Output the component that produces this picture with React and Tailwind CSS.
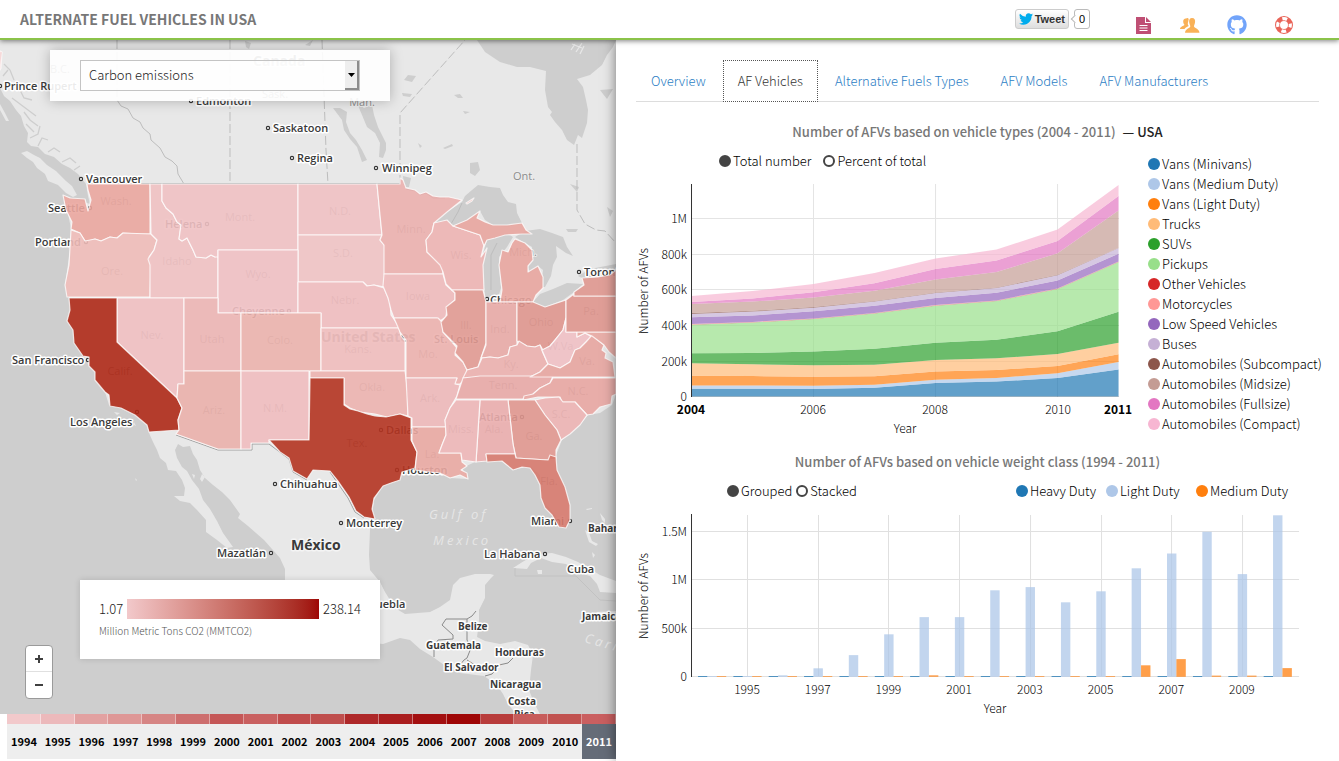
import React from "react";
import { FaGithub } from "react-icons/fa";

const LAND = "#e8e8e8";
const WATER = "#cecece";

const land = [
  "M0,40 V88 L4,96 10,101 16,110 21,116 24,126 28,133 27,142 31,146 38,147 45,154 54,157 62,164 70,168 78,174 86,184 88,196 90,204 63,195 68,213 71,229 70,250 65,285 69,298 70,310 67,321 73,330 74,340 83,355 89,366 95,372 95,380 105,392 109,405 121,408 135,415 147,425 149,433 153,442 157,450 160,458 166,463 168,470 176,471 182,480 185,488 184,496 174,496 180,501 190,503 197,510 206,520 206,532 217,540 227,548 233,547 228,540 223,533 217,521 210,509 203,500 199,489 192,480 187,471 182,467 177,458 175,450 178,444 183,447 190,446 193,454 197,460 200,470 205,478 213,485 222,492 230,500 235,507 240,514 238,518 248,526 256,533 264,540 272,549 280,558 285,569 285,580 300,625 340,640 383,644 400,638 410,640 420,649 433,657 444,665 460,673 484,676 497,685 503,694 508,704 516,714 H540 L534,703 529,690 531,670 533,655 528,645 515,641 500,644 485,641 477,637 479,622 479,610 485,598 485,585 491,578 494,575 490,574 475,574 460,578 453,585 450,600 440,607 430,612 405,614 395,608 385,592 380,582 370,570 369,555 370,530 372,516 374,500 383,486 400,480 402,472 440,473 450,478 468,479 462,468 475,462 500,460 513,470 530,466 540,475 541,498 555,515 560,527 568,526 570,505 565,490 557,470 556,455 562,440 580,425 588,415 600,413 612,405 616,394 V40Z",
  "M21,153 L27,151 34,155 40,158 47,165 56,171 66,181 72,186 77,195 73,197 66,193 58,185 48,181 45,174 37,168 33,162 27,158Z",
  "M513,568 L524,561 538,554 552,553 566,557 578,562 590,569 600,575 616,581 V593 L600,592 597,584 590,576 576,572 566,564 552,562 541,558 531,563 527,569Z",
  "M537,570 l5,0 0,4 -4,0Z",
  "M596,612 L616,611 V617 L600,617Z",
  "M585,530 l4,3 3,8 6,3 -2,2 -7,-4Z M600,513 l5,6 0,4 -3,-3Z M586,509 l6,-1 0,1 -5,1Z M592,552 l3,3 -2,3Z",
  "M549,109 L555,107 561,110 564,115 558,116Z",
  "M114,412 l6,1 -3,2Z M124,420 l4,1 -2,1Z M134,422 l2,4 -2,-1Z M135,478 l2,2 -1,1Z",
  "M192,474 l3,1 -1,4Z M202,474 l3,3 -3,5 -2,-3Z M0,104 l5,9 4,8 -3,0 -6,-11Z",
];

const water = [
  "M477,40 L485,52 491,56 500,62 517,67 530,67 546,71 545,90 548,107 552,112 550,115 555,122 562,130 567,140 574,145 578,135 582,138 587,123 588,110 586,100 583,87 577,79 590,75 602,65 607,55 613,47 616,40Z",
  "M435,223 L440,217 447,212 462,202 465,196 472,190 478,185 490,187 500,188 503,195 508,202 516,204 517,213 522,223 507,227 493,225 485,220 480,211 467,220 453,226 447,220Z",
  "M487,240 L482,257 483,280 486,302 497,301 501,288 499,265 499,257 507,247 513,237 507,233 497,237Z",
  "M515,237 L525,231 540,229 552,233 563,237 567,247 573,256 566,253 556,246 557,257 553,265 551,276 545,287 541,287 543,270 538,266 530,273 528,267 533,258 532,247 520,240Z",
  "M533,302 L540,294 553,289 567,283 583,284 574,292 563,300 545,307Z",
  "M578,276 L590,269 616,264 V272 L600,278 584,279Z",
  "M357,103 L364,108 372,105 374,115 378,127 382,135 386,143 386,150 383,158 379,157 380,143 375,133 367,127 362,115Z",
  "M333,108 L340,108 347,112 346,122 350,133 356,140 362,150 367,160 362,162 357,147 350,139 344,130 342,120Z",
  "M404,80 L408,75 416,76 412,82Z M402,93 l10,1 -2,3 -7,-1Z M454,95 l6,-1 3,4 -5,0Z M463,111 l7,1 -5,2Z M443,148 l9,-4 1,2 -8,3Z M418,143 l4,3 -2,2Z M470,163 l8,-1 2,8 -5,6 -5,-3Z M570,184 l9,3 -2,5Z M566,229 l12,0 -2,3 -8,0Z M600,90 l13,-1 -6,10 -4,-5Z M607,207 l6,4 -3,6Z M245,41 l6,2 -2,6 -3,-2Z M305,45 l8,-5 -3,6Z M403,176 l8,2 -2,9 -5,0Z",
];

const fjords =
  "M4,64 L10,70 14,80 M8,70 L3,76 M14,84 L20,90 26,88 M20,90 L24,98 32,100 M12,98 L20,104 28,110 36,116 M24,112 L30,120 38,126 M26,124 L34,132 M30,138 L38,134 40,126 M38,146 L42,138 48,140 M48,152 L54,148 60,152 M62,162 L70,158 76,163 M74,170 L80,166";

const states = [
  ["M63,195 L70,198 85,199 88,211 91,200 88,190 87,184 H150 V234 L140,234 123,233 117,238 110,237 101,241 95,239 88,241 85,241 80,233 71,229 72,222 66,210Z", "#eaa69f"],
  ["M71,230 L80,233 85,241 95,239 101,241 110,237 117,238 123,233 151,234 157,240 154,250 149,257 151,264 150,297 H67 L65,285 69,265Z", "#eebbb8"],
  ["M150,184 H162 V201 L166,208 173,214 177,222 181,225 179,239 182,241 187,238 193,250 196,257 206,258 211,255 215,257 218,255 V298 H150 V265 L148,259 154,250 157,240 151,234Z", "#efc1c2"],
  ["M162,184 H298 V250 H218 V257 L215,257 211,255 206,258 196,257 193,250 187,238 182,241 179,239 181,225 177,222 173,214 166,208 162,201Z", "#f0c1c3"],
  ["M298,184 H377 L380,215 382,235 H298Z", "#f0c1c3"],
  ["M298,235 H382 L380,240 385,246 V287 L374,285 367,286 363,282 H298Z", "#f0c3c4"],
  ["M218,250 H298 V313 H218Z", "#f0c0c3"],
  ["M298,282 H363 L367,286 374,285 384,288 390,302 391,315 400,328 H321 V313 H298Z", "#efbdbf"],
  ["M117,298 H184 V384 H178 L177,398 117,342Z", "#efbfc1"],
  ["M69,298 H117 V342 L177,398 182,408 178,420 179,430 149,432 147,425 135,415 121,408 110,406 109,395 105,392 95,380 V372 L89,366 89,357 83,356 74,343 73,330 67,321 70,310Z", "#ae2917"],
  ["M184,298 H218 V313 H241 V371 H184Z", "#ecb5b4"],
  ["M241,313 H321 V371 H241Z", "#ebb2ad"],
  ["M184,371 H241 V449 H218 L176,434 179,430 178,420 182,408 177,398 178,384 H184Z", "#eab0ab"],
  ["M241,371 H309 V440 H269 V443 H251 V449 H241Z", "#efbdbf"],
  ["M321,328 H399 L401,336 405,341 V371 H321Z", "#efbcbd"],
  ["M310,371 H405 L406,378 408,395 408,416 400,414 387,417 375,414 360,412 350,408 344,404 V378 H310Z", "#ecb2af"],
  ["M310,378 H344 V405 L350,409 358,411 367,414 375,416 386,417 400,414 411,418 V440 L417,452 415,468 402,472 400,480 391,483 383,486 374,498 372,509 375,519 364,517 356,511 349,497 338,481 330,471 313,470 307,479 293,471 289,458 280,452 269,440 H309Z", "#b43421"],
  ["M377,184 H400 V178 L403,180 406,188 415,190 420,194 426,192 433,196 440,197 449,197 462,200 447,212 434,223 432,232 426,240 427,252 435,259 442,265 443,274 H384 V245 L380,240 382,235 380,215Z", "#ebb0ae"],
  ["M384,274 H443 L446,285 455,293 455,300 447,307 446,317 440,321 437,318 H394 L391,310 388,298 383,286Z", "#eebabb"],
  ["M394,318 H438 L442,322 443,332 452,342 457,348 455,355 463,362 467,370 466,378 460,384 454,384 457,378 H406 V340 L400,332Z", "#ecb1ae"],
  ["M406,378 H457 L455,384 460,385 457,396 450,408 445,420 446,427 H412 V418 L408,416Z", "#edb8b9"],
  ["M412,427 H446 L446,435 442,445 439,453 H461 L462,462 467,466 461,470 467,473 468,479 460,475 450,478 440,473 430,472 415,470 417,452 412,441Z", "#e9a8a2"],
  ["M434,223 L447,220 453,226 465,230 480,235 484,245 481,257 487,248 483,265 484,290 H452 L446,284 443,272 440,265 427,252 426,240 432,232Z", "#edb4b3"],
  ["M452,290 H483 L486,302 V343 L482,355 478,367 467,370 463,362 455,353 457,346 443,332 441,322 447,315 446,307 455,300 455,293Z", "#e19a92"],
  ["M453,226 L467,220 480,211 477,218 485,222 493,225 507,225 522,223 526,230 532,234 522,234 505,235 495,238 487,240 484,246 480,235 465,230Z", "#e8a59e"],
  ["M466,203 L474,198 472,201 467,204Z", "#eeb4b0"],
  ["M515,239 L525,243 532,250 533,260 528,266 528,272 538,266 543,277 543,288 536,295 533,302 H500 L502,290 499,265 502,250 508,252 512,243Z", "#e8a59e"],
  ["M486,302 H517 V345 L510,347 508,355 498,358 490,357 481,358 486,345Z", "#e8aaa6"],
  ["M517,302 H533 L545,307 566,300 V318 L563,330 555,340 550,346 543,350 540,345 535,347 527,346 517,341Z", "#df968e"],
  ["M467,370 L478,367 482,358 490,357 498,358 508,355 510,347 517,345 519,341 527,346 535,347 540,345 543,353 548,364 540,372 530,377 H480 L463,378Z", "#ebb0ae"],
  ["M463,378 L480,376 H553 L550,383 540,388 533,394 523,399 H456 L460,387Z", "#e8a9a6"],
  ["M566,318 V332 H577 V337 L585,333 592,337 586,342 580,348 575,350 570,362 560,368 548,364 542,350 550,346 555,340 563,330Z", "#efc0c4"],
  ["M530,377 L540,372 548,364 560,368 570,362 575,350 580,348 586,342 592,335 604,345 602,350 606,353 605,358 613,362 615,377Z", "#e7a5a0"],
  ["M577,332 H616 V358 L609,352 604,345 592,336 585,333 577,337Z", "#e8a8a2"],
  ["M566,300 L574,294 V296 H616 V332 H566Z", "#df968e"],
  ["M574,296 L574,292 584,285 582,278 598,277 610,275 616,270 V296Z", "#df978f"],
  ["M553,378 H616 V394 L612,396 611,404 600,407 593,414 587,415 575,402 562,402 560,397 538,397 523,400 524,396 533,394 540,388 550,383Z", "#e8a6a2"],
  ["M535,400 L545,398 559,397 563,402 575,402 587,415 580,425 570,434 561,440 557,430 545,415Z", "#ecb2b2"],
  ["M508,400 H535 L545,415 557,430 561,440 556,450 556,459 548,460 516,458 513,444Z", "#e0978f"],
  ["M480,400 H508 L513,444 515,454 H486 L487,461 476,462Z", "#eaadad"],
  ["M456,400 H480 L476,462 462,460 461,453 H439 L442,445 446,435 445,420 450,408Z", "#edb6b7"],
  ["M486,454 H515 L516,458 548,460 550,455 556,457 557,470 565,487 570,505 570,520 566,528 559,527 552,515 545,508 541,498 540,485 535,475 530,468 522,467 513,470 502,461 487,462Z", "#d6796d"],
  ["M0,51 L2,52 1,68 0,70Z", "#efb5b5"],
];

const borders = [
  "M117,40 V100 M230,40 V184 M322,40 L326,150 328,184 M400,184 V113 L465,40 M577,144 V210 L585,224 596,230 605,231 616,243",
  "M117,100 L121,106 128,109 133,118 140,122 143,128 150,134 151,140 160,148 165,157 172,161 177,166 178,174 184,184",
  "M87,183.500 H400",
];

const nationBorders =
  "M434,657 L434,647 438,640 453,639 453,635 442,625 446,619 H467 V640 M467,619 L472,616 476,611 M467,640 L471,648 467,658 464,660 459,666 M467,660 L475,665 492,668 499,665 508,663 513,658 M485,676 L492,674 498,667";

const mapLabels = [
  ["Prince Rupert", 4, 90, 11],
  ["Edmonton", 196, 105, 11],
  ["Saskatoon", 273, 132, 11],
  ["Regina", 297, 162, 11],
  ["Winnipeg", 382, 172, 11],
  ["Vancouver", 86, 183, 11],
  ["Seattle", 48, 212, 11],
  ["Portland", 35, 246, 11],
  ["Helena", 165, 228, 11],
  ["Cheyenne", 232, 315, 11],
  ["San Francisco", 12, 364, 11],
  ["Los Angeles", 70, 426, 11],
  ["Chihuahua", 280, 488, 11],
  ["Monterrey", 346, 527, 11],
  ["Mazatlán", 217, 557, 11],
  ["Dallas", 386, 434, 11],
  ["Houston", 402, 474, 11],
  ["Atlanta", 479, 421, 11],
  ["St. Louis", 434, 343, 11],
  ["Chicago", 490, 304, 11],
  ["Toronto", 584, 276, 11],
  ["Miami", 531, 525, 11],
  ["La Habana", 484, 558, 11],
  ["Puebla", 369, 608, 11],
  ["Cuba", 567, 573, 11],
  ["Bahamas", 588, 532, 10],
  ["Belize", 458, 630, 10],
  ["Guatemala", 426, 649, 10],
  ["Honduras", 495, 656, 10],
  ["El Salvador", 444, 671, 10],
  ["Nicaragua", 490, 688, 10],
  ["Jamaica", 582, 620, 10],
  ["Costa", 508, 705, 10],
  ["Rica", 514, 718, 10],
  ["México", 291, 550, 14],
  ["United States", 321, 342, 14],
  ["Canada", 253, 66, 14],
];

const stateLabels = [
  ["B.C.", 60, 73], ["Sask.", 275, 98], ["Man.", 362, 106], ["Ont.", 524, 180],
  ["Wash.", 116, 205], ["Mont.", 240, 221], ["N.D.", 340, 215], ["S.D.", 343, 257],
  ["Minn.", 411, 233], ["Wis.", 461, 259], ["Mich.", 523, 256], ["Ore.", 112, 275],
  ["Idaho", 177, 265], ["Wyo.", 258, 278], ["Nev.", 152, 339], ["Utah", 212, 343],
  ["Colo.", 280, 344], ["Calif.", 120, 375], ["Ariz.", 214, 414], ["N.M.", 275, 412],
  ["Nebr.", 345, 304], ["Iowa", 418, 300], ["Kans.", 358, 353], ["Mo.", 428, 358],
  ["Okla.", 372, 391], ["Ark.", 430, 402], ["Tex.", 357, 447], ["La.", 432, 458],
  ["Miss.", 461, 433], ["Ala.", 494, 433], ["Ga.", 534, 440], ["Fla.", 549, 485],
  ["S.C.", 561, 418], ["N.C.", 578, 395], ["Tenn.", 503, 389], ["Ky.", 511, 368],
  ["Ill.", 466, 329], ["Ind.", 500, 333], ["Ohio", 541, 326], ["Pa.", 591, 315],
  ["W.Va.", 562, 350], ["Va.", 587, 365],
];

const cityDots = [
  [0, 86], [191, 101], [268, 128], [292, 158], [376, 168], [81, 179], [90, 208], [86, 242],
  [207, 224], [289, 311], [88, 360], [137, 412], [275, 484], [341, 523], [271, 553],
  [381, 430], [397, 470], [522, 417], [487, 299], [579, 272], [570, 521], [545, 554],
];

function UsMap() {
  return (
    <svg
      viewBox="0 40 616 674"
      preserveAspectRatio="xMinYMin slice"
      className="absolute inset-0 h-full w-full font-['Open_Sans',sans-serif]"
      role="img"
      aria-label="Carbon emissions by state"
    >
      <rect x="0" y="40" width="616" height="674" fill={WATER} />
      {land.map((d) => <path key={d} d={d} fill={LAND} />)}
      {water.map((d) => <path key={d} d={d} fill={WATER} />)}
      <path d={fjords} fill="none" stroke={WATER} strokeWidth="1.3" />
      <path d="M571,50 l4,-6 M576,52 l6,-9 M572,44 l10,4 M580,54 l4,-8" stroke={LAND} strokeWidth="1.2" />
      <g fill="none" stroke="#bdbdbd" strokeWidth="1">
        <path d={borders[0]} strokeDasharray="9 3" />
        <path d={borders[1]} />
        <path d={borders[2]} stroke="#adadad" />
        <path d="M451,224 L458,212 462,203 M491,290 V255 L497,243" />
        <path d="M515,568 V576 H576 L590,590 600,600 616,601" stroke="#c2c2c2" />
      </g>
      <path d={nationBorders} fill="none" stroke="#8a8a8a" strokeWidth="1" />
      <path d="M406,189 L415,191 420,195 426,193 433,198 445,198" fill="none" stroke="#9a9a9a" />
      <path d="M176,435 L218,450 H252 V444 H269 L289,459 293,472 307,480 M330,472 L348,498 355,512 364,518" fill="none" stroke="#a0a0a0" />
      <g stroke="#ececec" strokeWidth="2" paintOrder="stroke" strokeLinejoin="round" fill="#8c8c8c" fontSize="11" textAnchor="middle">
        {stateLabels.map(([t, x, y]) => <text key={t} x={x} y={y}>{t}</text>)}
      </g>
      <g stroke="#ffffff" strokeWidth="3" paintOrder="stroke" strokeLinejoin="round" fill="#3a3a3a" fontWeight="600">
        {mapLabels.map(([t, x, y, s]) => (
          <text
            key={t}
            x={x}
            y={y}
            fontSize={s}
            fontWeight={s === 11 ? 600 : 700}
            stroke={s === 14 ? "#f4f4f4" : "#ffffff"}
            fill={t === "United States" || t === "Canada" ? "#777777" : "#3a3a3a"}
          >
            {t}
          </text>
        ))}
      </g>
      <g fill="#ffffff" stroke="#333333" strokeWidth="1.2">
        {cityDots.map(([x, y]) => <circle key={`${x}-${y}`} cx={x} cy={y} r="1.6" />)}
      </g>
      <g fill="#e6e6e6" fontSize="13" fontStyle="italic" letterSpacing="3">
        <text x="429" y="519">Gulf of</text>
        <text x="433" y="545">Mexico</text>
        <text x="584" y="642" transform="rotate(16 584 642)">Caribbean</text>
      </g>
      <g fillOpacity="0.9" stroke="#ffffff" strokeOpacity="0.75" strokeWidth="1.2" strokeLinejoin="round">
        {states.map(([d, c]) => <path key={d} d={d} fill={c} />)}
      </g>
    </svg>
  );
}

const years = [
  ["1994", "bg-[#f2c9cb]"], ["1995", "bg-[#ecb9bb]"], ["1996", "bg-[#e2a1a1]"],
  ["1997", "bg-[#de9796]"], ["1998", "bg-[#d68584]"], ["1999", "bg-[#cd6e6e]"],
  ["2000", "bg-[#c55757]"], ["2001", "bg-[#c96060]"], ["2002", "bg-[#c04c4c]"],
  ["2003", "bg-[#bf4e4d]"], ["2004", "bg-[#ae2829]"], ["2005", "bg-[#a91d1e]"],
  ["2006", "bg-[#a30f10]"], ["2007", "bg-[#9e0505]"], ["2008", "bg-[#b83c3b]"],
  ["2009", "bg-[#c75c5b]"], ["2010", "bg-[#c15250]"], ["2011", "bg-[#ca5f60]"],
];

function Timeline() {
  return (
    <div className="grid shrink-0 grid-cols-18 bg-white pb-0.5 pl-[7px]">
      {years.map(([year, tone]) => (
        <button key={year} type="button" className="block">
          <span className={`block h-2.5 border-r border-white/40 ${tone}`} />
          <span
            className={`block h-[35px] text-center text-[11px] leading-[35px] font-bold ${
              year === "2011" ? "bg-[#656c78] text-white" : "bg-[#eeeeee] text-black"
            }`}
          >
            {year}
          </span>
        </button>
      ))}
    </div>
  );
}

function MapPane() {
  return (
    <section className="flex w-[46%] shrink-0 flex-col">
      <div className="relative min-h-[560px] flex-1 overflow-hidden">
        <UsMap />
        <div className="absolute top-2.5 left-[50px] w-[340px] bg-white/90 px-[30px] py-2.5 shadow-[0_0_12px_rgba(0,0,0,0.25)]">
          <div className="relative w-[280px]">
            <select
              aria-label="Map measure"
              defaultValue="carbon"
              className="block h-[31px] w-full appearance-none border border-[#c4c4c4] bg-white/60 pb-0.5 pl-2 text-[13px] font-light text-[#222222]"
            >
              <option value="carbon">Carbon emissions</option>
              <option value="vehicles">Number of vehicles</option>
            </select>
            <span className="pointer-events-none absolute inset-y-px right-px flex w-3.5 items-center justify-center border-r-2 border-b-2 border-[#8c8c8c] bg-[#eeeeee]">
              <svg width="7" height="4" viewBox="0 0 7 4"><path d="M0,0 H7 L3.500,4Z" fill="#000000" /></svg>
            </span>
          </div>
        </div>
        <div className="absolute bottom-[55px] left-20 h-[79px] w-[300px] bg-white px-[19px] pt-[19px] shadow-[0_0_6px_rgba(0,0,0,0.15)]">
          <div className="flex items-center gap-1 text-[13px] leading-5 font-light text-[#222222]">
            <span>1.07</span>
            <span className="h-5 w-48 bg-linear-to-r from-[#f2c9cb] to-[#9e0505]" />
            <span>238.14</span>
          </div>
          <p className="mt-1 text-[10px] leading-4 font-light text-[#555555]">Million Metric Tons CO2 (MMTCO2)</p>
        </div>
        <div className="absolute bottom-[15px] left-[25px] flex w-7 flex-col rounded-sm border border-[#9a9a9a] bg-white">
          <button type="button" aria-label="Zoom in" className="flex h-[26px] items-center justify-center border-b border-[#e0e0e0]">
            <svg width="8" height="8" viewBox="0 0 8 8"><path d="M4,0 V8 M0,4 H8" stroke="#404040" strokeWidth="2" /></svg>
          </button>
          <button type="button" aria-label="Zoom out" className="flex h-[26px] items-center justify-center">
            <svg width="8" height="8" viewBox="0 0 8 8"><path d="M0,4 H8" stroke="#404040" strokeWidth="2" /></svg>
          </button>
        </div>
      </div>
      <Timeline />
    </section>
  );
}

function Header() {
  return (
    <header className="relative z-20 flex h-10 shrink-0 items-center border-b-2 border-[#8bc34a] bg-white px-5 shadow-[0_1px_5px_rgba(0,0,0,0.5)]">
      <h1 className="text-sm leading-6 font-bold text-[#777777]">ALTERNATE FUEL VEHICLES IN USA</h1>
      <div className="ml-auto flex items-center gap-[5px] font-['Liberation_Sans',sans-serif]">
        <button type="button" className="flex h-5 items-center gap-0.5 rounded-[3px] border border-[#cccccc] bg-linear-to-b from-white to-[#dedede] px-[3px] text-[11px] font-bold text-[#333333]">
          <svg width="14" height="12" viewBox="0 0 24 20" aria-hidden="true">
            <path fill="#00aced" d="M24,2.400a9.800,9.800 0 0 1-2.800.8A4.900,4.900 0 0 0 23.300.5a9.900,9.900 0 0 1-3.100,1.200A4.900,4.900 0 0 0 11.800,6.200 14,14 0 0 1 1.700,1.100a4.900,4.900 0 0 0 1.500,6.500A4.900,4.900 0 0 1 1,7v.1a4.900,4.900 0 0 0 3.900,4.800 5,5 0 0 1-2.200.1 4.900,4.900 0 0 0 4.600,3.400A9.900,9.900 0 0 1 0,17.500a14,14 0 0 0 7.500,2.200c9.100,0 14-7.500 14-14v-.6A10,10 0 0 0 24,2.400Z" />
          </svg>
          Tweet
        </button>
        <span className="relative flex h-5 w-4 items-center justify-center rounded-[3px] border border-[#bbbbbb] bg-white text-[11px] text-black">
          <span className="absolute top-1.5 -left-[3px] size-1.5 rotate-45 border-b border-l border-[#bbbbbb] bg-white" />
          0
        </span>
      </div>
      <nav className="mt-3 ml-[43px] flex items-center gap-[27px] pr-[25px]">
        <a href="#report" aria-label="Report" className="flex w-5 justify-center">
          <svg width="15" height="17" viewBox="0 0 15 17">
            <path fill="#bf4f74" d="M0,0 H9 V6 H15 V17 H0Z M10,0 L15,5 H10Z" />
            <path d="M3.500,8.500 H11.500 M3.500,11 H11.500 M3.500,13.500 H11.500" stroke="#ffffff" strokeWidth="1" />
          </svg>
        </a>
        <a href="#team" aria-label="Team" className="flex w-5 justify-center">
          <svg width="20" height="17" viewBox="0 0 20 17" fill="#f9b157">
            <path d="M6,1.500 C8,0 9.200,1.500 8.500,4 C7.500,6 7.500,8 8.800,9 C6.500,10 5,11 4.500,12 H0 C0,9.500 3.500,9 4.500,8 C4,7 3,6 3.200,4 C3.400,2.300 4.500,1.300 6,1.500Z" />
            <path stroke="#ffffff" strokeWidth="0.800" paintOrder="stroke" d="M12,1 C14.500,1 15.500,3 15,5.500 C14.700,7.500 14,8 14,9.500 C15,11.500 19,11.500 19.500,15.800 H5 C5.500,11.500 9.500,11.500 10.300,9.500 C10.300,8 9.500,7.500 9.200,5.500 C8.800,3 9.800,1 12,1Z" />
          </svg>
        </a>
        <a href="#source" aria-label="Source code" className="flex w-5 justify-center">
          <FaGithub size={20} color="#72a4fa" />
        </a>
        <a href="#help" aria-label="Help" className="flex w-5 justify-center">
          <svg width="20" height="20" viewBox="0 0 20 20" fill="none">
            <circle cx="10" cy="10" r="6.500" stroke="#e96458" strokeWidth="5" />
            <circle cx="10" cy="10" r="6.300" stroke="#ffffff" strokeWidth="3.200" strokeDasharray="4.900 4.996" strokeDashoffset="2.450" />
          </svg>
        </a>
      </nav>
    </header>
  );
}

const tabs = ["Overview", "AF Vehicles", "Alternative Fuels Types", "AFV Models", "AFV Manufacturers"];

function Tabs() {
  return (
    <nav className="flex gap-0.5 border-b border-[#dddddd]">
      {tabs.map((tab) => (
        <a
          key={tab}
          href="#chart"
          className={`-mb-px border px-3.5 text-[13px] leading-10 font-light ${
            tab === "AF Vehicles" ? "border-dotted border-[#555555] bg-white text-[#333333]" : "border-transparent text-[#2a7dc4]"
          }`}
        >
          {tab}
        </a>
      ))}
    </nav>
  );
}

function Choice({ name, label, checked }) {
  return (
    <label className="flex items-center gap-0.5 text-[13px] leading-5 font-light text-black">
      <input
        type="radio"
        name={name}
        defaultChecked={checked}
        className="size-3 shrink-0 appearance-none rounded-full border-2 border-[#444444] bg-white checked:bg-[#444444]"
      />
      {label}
    </label>
  );
}

const series = [
  ["Vans (Minivans)", "bg-[#1f77b4]", "#1f77b4", [388.7, 388.7, 389, 387.7, 383, 381.5, 378, 369.5]],
  ["Vans (Medium Duty)", "bg-[#aec7e8]", "#aec7e8", [385.5, 385.5, 385.7, 384.8, 379.8, 378, 373.3, 362]],
  ["Vans (Light Duty)", "bg-[#ff7f0e]", "#ff7f0e", [375.7, 376, 376.7, 376.2, 371.5, 370, 366, 354.3]],
  ["Trucks", "bg-[#ffbb78]", "#ffbb78", [363.3, 364.3, 365.2, 364.8, 360, 358.3, 354, 342.7]],
  ["SUVs", "bg-[#2ca02c]", "#2ca02c", [353.3, 353, 351.5, 348.8, 342.7, 339.7, 331.3, 311.7]],
  ["Pickups", "bg-[#98df8a]", "#98df8a", [324.7, 322.5, 319, 313.5, 305.7, 301, 289, 262]],
  ["Other Vehicles", "bg-[#d62728]", "#d62728", [324.5, 322.3, 318.8, 313.3, 305.5, 300.8, 288.8, 261.8]],
  ["Motorcycles", "bg-[#ff9896]", "#ff9896", [324.1, 321.9, 318.4, 312.9, 305.1, 300.4, 288.4, 261.4]],
  ["Low Speed Vehicles", "bg-[#9467bd]", "#9467bd", [317.3, 315.5, 311.3, 305.7, 298, 292.7, 280.5, 253.7]],
  ["Buses", "bg-[#c5b0d5]", "#c5b0d5", [314, 311.6, 307.7, 301.6, 293.1, 288.1, 275.2, 248.1]],
  ["Automobiles (Subcompact)", "bg-[#8c564b]", "#8c564b", [313, 310.7, 307, 301, 292.4, 287.4, 274.7, 247.8]],
  ["Automobiles (Midsize)", "bg-[#c49c94]", "#c49c94", [304, 301.5, 297.5, 290.7, 279.5, 272, 253.3, 210.5]],
  ["Automobiles (Fullsize)", "bg-[#e377c2]", "#e377c2", [302, 298.5, 292.3, 283.3, 269, 260.5, 241, 196]],
  ["Automobiles (Compact)", "bg-[#f7b6d2]", "#f7b6d2", [296, 291, 284, 273, 258.5, 249.5, 229.5, 185]],
];

const axisYears = [691.5, 752.5, 813.5, 874.5, 935.5, 996.5, 1057.5, 1118.5];

function areaPath(index) {
  const base = index === 0 ? axisYears.map(() => 396.5) : series[index - 1][3];
  const top = series[index][3].map((y, i) => `${axisYears[i]},${y}`);
  const bottom = base.map((y, i) => `${axisYears[i]},${y}`).reverse();
  return `M${[...top, ...bottom].join(" L")}Z`;
}

function AreaChart() {
  return (
    <svg viewBox="636 171 512 269" className="block h-auto w-full font-light" fontSize="12" role="img" aria-label="Vehicles by type">
      <path d="M691,361.500 H1119 M691,325.500 H1119 M691,289.500 H1119 M691,254.500 H1119 M691,218.500 H1119 M813.500,184 V397 M935.500,184 V397 M1057.500,184 V397" stroke="#e4e4e4" fill="none" />
      {series.map(([name, , color], i) => (
        <path key={name} d={areaPath(i)} fill={color} fillOpacity="0.7" />
      ))}
      <path d="M691.500,184 V397" stroke="#333333" />
      <path d="M691,396.500 H1119" stroke="#000000" strokeOpacity="0.15" />
      <g textAnchor="end">
        <text x="687" y="401">0</text>
        <text x="687" y="366">200k</text>
        <text x="687" y="330">400k</text>
        <text x="687" y="294">600k</text>
        <text x="687" y="259">800k</text>
        <text x="687" y="223">1M</text>
      </g>
      <g textAnchor="middle">
        <text x="691" y="414" fontWeight="700">2004</text>
        <text x="813" y="414">2006</text>
        <text x="935" y="414">2008</text>
        <text x="1058" y="414">2010</text>
        <text x="1118" y="414" fontWeight="700">2011</text>
        <text x="905" y="433">Year</text>
        <text transform="translate(648 291) rotate(-90)">Number of AFVs</text>
      </g>
    </svg>
  );
}

const light = [0.8, 0.8, 1.5, 8.5, 21.7, 42.5, 59.7, 59.7, 86.5, 89.7, 74.5, 85.5, 108.5, 123.3, 145, 102.7, 161.5];
const medium = [0.8, 0.8, 0.8, 0.8, 0.8, 0.8, 1.5, 0.8, 0.8, 0.8, 0.8, 0.8, 11.5, 17.7, 1.2, 1.2, 8.7];

function BarChart() {
  return (
    <svg viewBox="636 501 683 219" className="block h-auto w-full font-light" fontSize="12" role="img" aria-label="Vehicles by weight class">
      <path d="M691,676.500 H1299 M691,628.500 H1299 M691,579.500 H1299 M691,531.500 H1299 M747.500,515 V677 M818.500,515 V677 M888.500,515 V677 M959.500,515 V677 M1030.500,515 V677 M1101.500,515 V677 M1171.500,515 V677 M1242.500,515 V677" stroke="#e0e0e0" fill="none" />
      {light.map((h, i) => {
        const x = 698 + i * 35.35;
        return (
          <g key={i} fillOpacity="0.75">
            <rect x={x} y="676" width="9.400" height="1" fill="#1f77b4" />
            <rect x={x + 9.4} y={676.8 - h} width="9.400" height={h} fill="#aec7e8" />
            <rect x={x + 18.8} y={676.8 - medium[i]} width="9.400" height={medium[i]} fill="#ff7f0e" />
          </g>
        );
      })}
      <path d="M691.500,514 V677" stroke="#333333" />
      <g textAnchor="end">
        <text x="687" y="681">0</text>
        <text x="687" y="633">500k</text>
        <text x="687" y="584">1M</text>
        <text x="687" y="536">1.5M</text>
      </g>
      <g textAnchor="middle">
        {[1995, 1997, 1999, 2001, 2003, 2005, 2007, 2009].map((year, i) => (
          <text key={year} x={747 + i * 70.7} y="694">{year}</text>
        ))}
        <text x="995" y="713">Year</text>
        <text transform="translate(648 596) rotate(-90)">Number of AFVs</text>
      </g>
    </svg>
  );
}

const weights = [["Heavy Duty", "bg-[#1f77b4]"], ["Light Duty", "bg-[#aec7e8]"], ["Medium Duty", "bg-[#ff7f0e]"]];

function LegendItem({ label, tone }) {
  return (
    <li className="flex items-center gap-0.5 text-[13px] leading-5 font-light whitespace-nowrap text-black">
      <span className={`size-3 shrink-0 rounded-full ${tone}`} />
      {label}
    </li>
  );
}

export default function App() {
  return (
    <div className="flex min-h-screen flex-col bg-white font-['Noto_Sans_CJK_SC',sans-serif]">
      <Header />
      <main className="flex flex-1">
        <MapPane />
        <section id="chart" className="relative z-10 min-w-0 flex-1 bg-white px-5 pt-5 shadow-[0_0_12px_rgba(0,0,0,0.5)]">
          <Tabs />
          <h2 className="mt-5 text-center text-[13px] leading-5 font-medium text-[#777777]">
            Number of AFVs based on vehicle types (2004 - 2011) <span className="ml-1 text-[#222222]">— USA</span>
          </h2>
          <div className="flex pt-[9px]">
            <div className="min-w-0 flex-1">
              <div className="flex gap-3 pl-[83px]">
                <Choice name="vehicle-types" label="Total number" checked />
                <Choice name="vehicle-types" label="Percent of total" />
              </div>
              <AreaChart />
            </div>
            <ul className="w-[171px] shrink-0 pt-[3px]">
              {series.map(([name, tone]) => <LegendItem key={name} label={name} tone={tone} />)}
            </ul>
          </div>
          <h2 className="mt-3 text-center text-[13px] leading-5 font-medium text-[#777777]">
            Number of AFVs based on vehicle weight class (1994 - 2011)
          </h2>
          <div className="flex justify-between pt-[9px] pr-[33px] pl-[91px]">
            <div className="flex gap-1">
              <Choice name="weight-class" label="Grouped" checked />
              <Choice name="weight-class" label="Stacked" />
            </div>
            <ul className="grid grid-cols-[90px_90px_90px]">
              {weights.map(([name, tone]) => <LegendItem key={name} label={name} tone={tone} />)}
            </ul>
          </div>
          <BarChart />
        </section>
      </main>
    </div>
  );
}
